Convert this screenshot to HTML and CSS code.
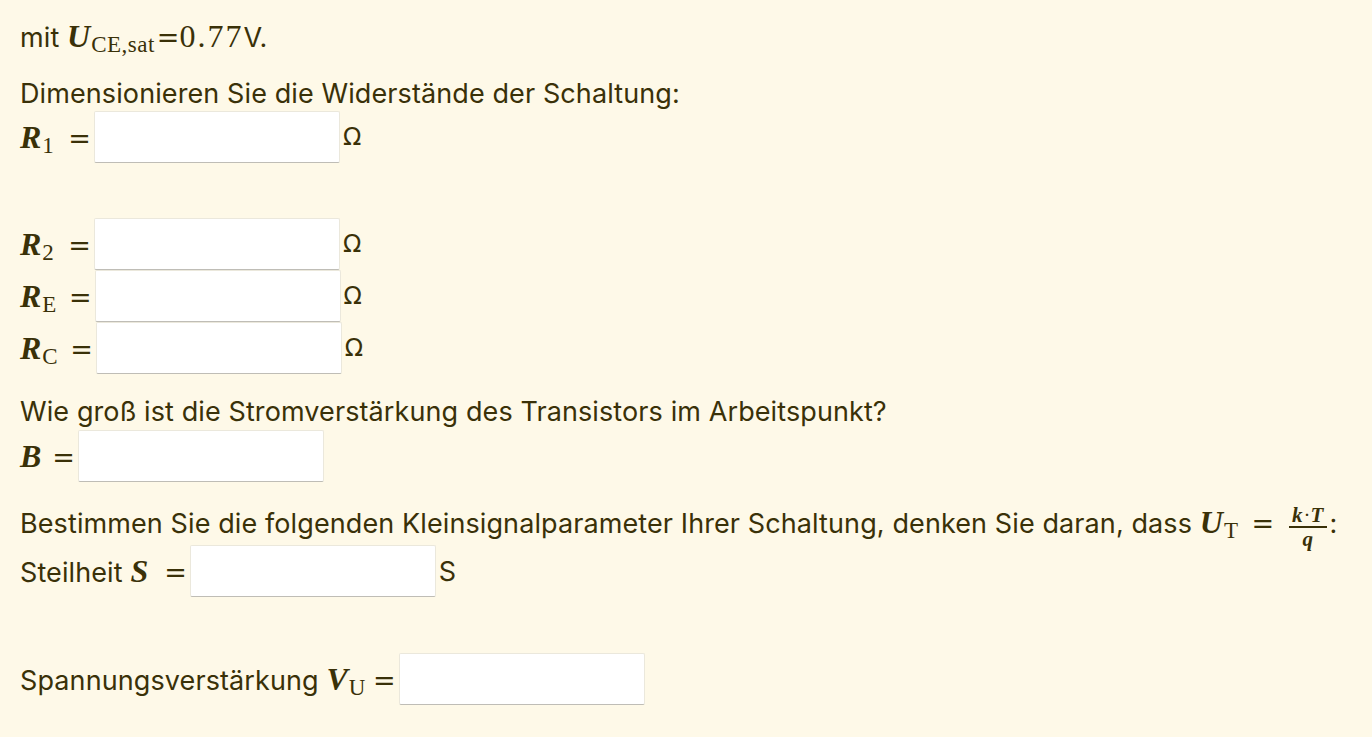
FILE: index.html
```html
<!DOCTYPE html>
<html lang="de">
<head>
<meta charset="utf-8">
<link rel="stylesheet" href="styles.css">
</head>
<body>
<div class="page">
  <p class="text first">mit <span class="m"><i>U</i><sub>CE,sat</sub><span class="eq tight">=</span><span class="num-d">0.77</span></span>V.</p>
  <p class="text t2">Dimensionieren Sie die Widerstände der Schaltung:</p>
  <div class="row"><span class="m lbl"><i>R</i><sub>1</sub><span class="eq digit">=</span></span><input class="field" type="text"><span class="unit">Ω</span></div>
  <div class="row gapped"><span class="m lbl"><i>R</i><sub>2</sub><span class="eq digit">=</span></span><input class="field" type="text"><span class="unit">Ω</span></div>
  <div class="row"><span class="m lbl"><i>R</i><sub>E</sub><span class="eq wide">=</span></span><input class="field" type="text"><span class="unit">Ω</span></div>
  <div class="row"><span class="m lbl"><i>R</i><sub>C</sub><span class="eq wide">=</span></span><input class="field" type="text"><span class="unit">Ω</span></div>
  <p class="text t3">Wie groß ist die Stromverstärkung des Transistors im Arbeitspunkt?</p>
  <div class="row"><span class="m lbl"><i>B</i><span class="eq">=</span></span><input class="field" type="text"></div>
  <p class="text t4">Bestimmen Sie die folgenden Kleinsignalparameter Ihrer Schaltung, denken Sie daran, dass <span class="m"><i>U</i><sub>T</sub><span class="eq wide spaced">=</span><span class="frac"><span class="num"><i>k</i>·<i>T</i></span><span class="den"><i>q</i></span></span></span>:</p>
  <div class="row t5"><span class="lbl">Steilheit <span class="m"><i>S</i><span class="eq wider">=</span></span></span><input class="field" type="text"><span class="unit sans">S</span></div>
  <div class="row gapped2"><span class="lbl">Spannungsverstärkung <span class="m"><i>V</i><sub>U</sub><span class="eq vu">=</span></span></span><input class="field" type="text"></div>
</div>
</body>
</html>
```

FILE: styles.css
```css
html, body {
  margin: 0;
  padding: 0;
  background: #fef9e8;
}
body {
  color: #3a3108;
  font-family: Inter, "Noto Sans", "Liberation Sans", sans-serif;
  font-size: 27px;
  letter-spacing: 0.1px;
}
.page {
  padding: 21px 20px 20px 20px;
}
.text {
  margin: 0;
  line-height: 30px;
  height: 30px;
  white-space: nowrap;
}
.t2 { margin-top: 28px; }
.t3 { margin-top: 23px; }
.t4 { margin-top: 22px; }
.m {
  font-family: "Liberation Serif", "DejaVu Serif", serif;
  font-size: 32px;
  letter-spacing: 0;
}
.m i {
  font-style: italic;
  font-weight: bold;
  letter-spacing: 1px;
}
.m sub {
  font-size: 23px;
  vertical-align: -5px;
  line-height: 0;
  letter-spacing: 0.5px;
}
.num-d {
  letter-spacing: 2px;
}
.eq {
  font-family: "DejaVu Serif", serif;
  font-size: 27px;
  margin-left: 10px;
  margin-right: 2px;
}
.eq.tight { margin-left: 2px; margin-right: 0; }
.eq.wide { margin-left: 12px; }
.eq.digit { margin-left: 14px; }
.eq.wider { margin-left: 15px; }
.eq.vu { margin-left: 7px; }
.eq.spaced { margin-left: 13px; margin-right: 15px; }
.row {
  display: flex;
  align-items: center;
  height: 52px;
}
.t2 + .row { margin-top: 2px; }
.t3 + .row { margin-top: 3px; }
.gapped { margin-top: 55px; }
.t5 { margin-top: 11px; }
.gapped2 { margin-top: 56px; }
.lbl {
  white-space: nowrap;
  margin-right: 1px;
}
.field {
  box-sizing: border-box;
  width: 246px;
  height: 52px;
  margin: 0;
  background: #ffffff;
  border: 1px solid #ebe8dc;
  border-bottom: 1px solid #bfbdb6;
  border-radius: 2px;
  padding: 0 8px;
  font-size: 20px;
  outline: none;
}
.unit {
  margin-left: 3px;
  font-family: "DejaVu Sans", sans-serif;
  font-size: 24px;
}
.sans {
  font-family: Inter, "Noto Sans", "Liberation Sans", sans-serif;
  font-size: 27px;
}
.frac {
  display: inline-flex;
  flex-direction: column;
  align-items: center;
  vertical-align: middle;
  font-size: 21px;
  line-height: 20px;
  position: relative;
  top: 1px;
  margin-right: 2px;
}
.frac .num {
  border-bottom: 2px solid #3a3108;
  padding: 0 3px 1px 3px;
}
.frac .den {
  padding-top: 1px;
}
```
